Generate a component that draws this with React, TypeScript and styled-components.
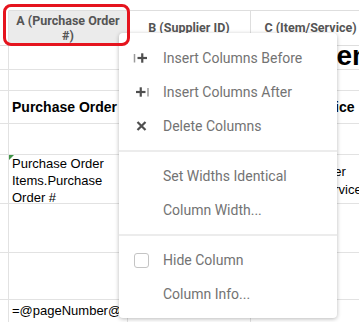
import React from "react";
import styled, { createGlobalStyle } from "styled-components";

const GlobalStyle = createGlobalStyle`
  body {
    margin: 0;
    background: #ffffff;
    font-family: "Liberation Sans", Arial, sans-serif;
  }
`;

const Viewport = styled.div`
  position: relative;
  width: 359px;
  height: 322px;
  overflow: hidden;
`;

const Sheet = styled.div`
  display: grid;
  grid-template-columns: 9px 119px 123px 120px;
  grid-template-rows: 36px 24px 21px 33px 31px 49px 49px 47px 31px;
  width: 371px;
  margin-top: 10px;
`;

const HeaderCell = styled.div<{ $selected?: boolean }>`
  position: relative;
  box-sizing: border-box;
  display: flex;
  align-items: center;
  justify-content: center;
  padding: 0 4px 1px;
  border-top: 1px solid #dedede;
  border-bottom: 1px solid #dedede;
  border-right: 1px solid #dedede;
  background: ${(p) => (p.$selected ? "#ebebeb" : "#ffffff")};
  color: #555555;
  font-family: Roboto, "Liberation Sans", sans-serif;
  font-weight: 700;
  font-size: 12.5px;
  line-height: 15px;
  text-align: center;

  ${(p) =>
    p.$selected &&
    `
    &::after {
      content: "";
      position: absolute;
      top: -7px;
      left: -6px;
      right: -3px;
      bottom: -1px;
      border: 3px solid #e5141e;
      border-radius: 8px;
      z-index: 3;
    }
  `}
`;

const Cell = styled.div<{ $bold?: boolean; $indent?: number; $center?: boolean; $top?: number }>`
  position: relative;
  box-sizing: border-box;
  display: flex;
  flex-direction: column;
  justify-content: ${(p) => (p.$center ? "center" : "flex-start")};
  padding: ${(p) => p.$top ?? 0}px 3px 0 ${(p) => p.$indent ?? 3}px;
  border-bottom: 1px solid #e2e2e2;
  border-right: 1px solid #e2e2e2;
  color: #000000;
  font-size: ${(p) => (p.$bold ? 14 : 13)}px;
  font-weight: ${(p) => (p.$bold ? 700 : 400)};
  line-height: 17px;
  white-space: ${(p) => (p.$indent ? "nowrap" : "normal")};
`;

const Line = styled.span`
  line-height: 18px;
`;

const Gutter = styled.div`
  box-sizing: border-box;
  border-bottom: 1px solid #e2e2e2;
  border-right: 1px solid #e2e2e2;
`;

const GutterHead = styled(Gutter)`
  border-top: 1px solid #ffffff;
  border-bottom-color: #dedede;
`;

const BigTitle = styled.span`
  font-size: 28px;
  font-weight: 700;
  line-height: 20px;
  white-space: nowrap;
`;

const FormulaMark = styled.span`
  position: absolute;
  top: 0;
  left: 0;
  width: 0;
  height: 0;
  border-top: 5px solid #3f9447;
  border-right: 5px solid transparent;
`;

const Menu = styled.div`
  position: absolute;
  left: 119px;
  top: 33px;
  width: 218px;
  padding: 8px 0 7px;
  box-sizing: border-box;
  background: #ffffff;
  border-radius: 4px;
  box-shadow: 0 1px 4px rgba(0, 0, 0, 0.28);
  z-index: 2;
  font-family: Roboto, "Liberation Sans", sans-serif;
`;

const MenuItem = styled.div`
  display: flex;
  align-items: center;
  gap: 14px;
  height: 34px;
  padding-left: 14px;
  color: #737373;
  font-size: 14px;
`;

const IconSlot = styled.span`
  display: flex;
  align-items: center;
  width: 16px;
  height: 16px;
`;

const Checkbox = styled.span`
  box-sizing: border-box;
  width: 15px;
  height: 15px;
  margin-left: 1px;
  border: 1.5px solid #c4c4c4;
  border-radius: 3px;
`;

const Separator = styled.div`
  height: 2px;
  margin: 7px 0;
  background: #ececec;
`;

const InsertBeforeIcon = () => (
  <svg width="16" height="12" viewBox="0 0 16 12">
    <line x1="1.5" y1="2" x2="1.5" y2="10.5" stroke="#9b9b9b" strokeWidth="1.5" />
    <line x1="4.5" y1="6" x2="14" y2="6" stroke="#4f4f4f" strokeWidth="2.2" />
    <line x1="9.25" y1="1.3" x2="9.25" y2="10.7" stroke="#4f4f4f" strokeWidth="2.2" />
  </svg>
);

const InsertAfterIcon = () => (
  <svg width="16" height="12" viewBox="0 0 16 12">
    <line x1="3" y1="6" x2="12.5" y2="6" stroke="#4f4f4f" strokeWidth="2.2" />
    <line x1="7.75" y1="1.3" x2="7.75" y2="10.7" stroke="#4f4f4f" strokeWidth="2.2" />
    <line x1="15" y1="2" x2="15" y2="10.5" stroke="#9b9b9b" strokeWidth="1.5" />
  </svg>
);

const DeleteIcon = () => (
  <svg width="16" height="12" viewBox="0 0 16 12">
    <path d="M4.5 2 L12.5 10 M12.5 2 L4.5 10" stroke="#4f4f4f" strokeWidth="2.2" />
  </svg>
);

const App = () => (
  <Viewport>
    <GlobalStyle />
    <Sheet>
      <GutterHead />
      <HeaderCell $selected>A (Purchase Order #)</HeaderCell>
      <HeaderCell>B (Supplier ID)</HeaderCell>
      <HeaderCell>C (Item/Service)</HeaderCell>

      <Gutter />
      <Cell />
      <Cell />
      <Cell $indent={3}>
        <BigTitle>Line Items</BigTitle>
      </Cell>

      <Gutter />
      <Cell />
      <Cell />
      <Cell />

      <Gutter />
      <Cell $bold $center>Purchase Order</Cell>
      <Cell />
      <Cell $bold $center $indent={21}>Item/Service</Cell>

      <Gutter />
      <Cell />
      <Cell />
      <Cell />

      <Gutter />
      <Cell>
        <FormulaMark />
        Purchase Order Items.Purchase Order #
      </Cell>
      <Cell />
      <Cell $indent={3} $top={8}>
        <Line>Purchase Order</Line>
        <Line>Items.Item/Service</Line>
      </Cell>

      <Gutter />
      <Cell />
      <Cell />
      <Cell />

      <Gutter />
      <Cell />
      <Cell />
      <Cell />

      <Gutter />
      <Cell $top={2}>=@pageNumber@</Cell>
      <Cell />
      <Cell />
    </Sheet>

    <Menu>
      <MenuItem>
        <IconSlot>
          <InsertBeforeIcon />
        </IconSlot>
        Insert Columns Before
      </MenuItem>
      <MenuItem>
        <IconSlot>
          <InsertAfterIcon />
        </IconSlot>
        Insert Columns After
      </MenuItem>
      <MenuItem>
        <IconSlot>
          <DeleteIcon />
        </IconSlot>
        Delete Columns
      </MenuItem>
      <Separator />
      <MenuItem>
        <IconSlot />
        Set Widths Identical
      </MenuItem>
      <MenuItem>
        <IconSlot />
        Column Width...
      </MenuItem>
      <Separator />
      <MenuItem>
        <IconSlot>
          <Checkbox />
        </IconSlot>
        Hide Column
      </MenuItem>
      <MenuItem>
        <IconSlot />
        Column Info...
      </MenuItem>
    </Menu>
  </Viewport>
);

export default App;
